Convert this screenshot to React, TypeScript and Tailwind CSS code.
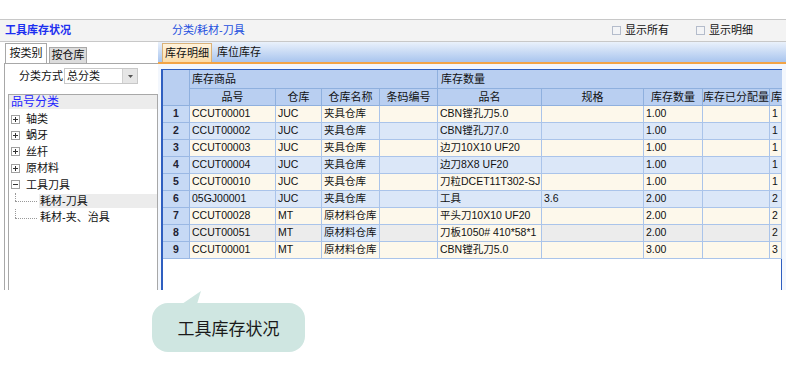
import React from "react";

const rows: string[][] = [
  ["1", "CCUT00001", "JUC", "夹具仓库", "", "CBN镗孔刀5.0", "", "1.00", "", "1"],
  ["2", "CCUT00002", "JUC", "夹具仓库", "", "CBN镗孔刀7.0", "", "1.00", "", "1"],
  ["3", "CCUT00003", "JUC", "夹具仓库", "", "边刀10X10 UF20", "", "1.00", "", "1"],
  ["4", "CCUT00004", "JUC", "夹具仓库", "", "边刀8X8 UF20", "", "1.00", "", "1"],
  ["5", "CCUT00010", "JUC", "夹具仓库", "", "刀粒DCET11T302-SJ", "", "1.00", "", "1"],
  ["6", "05GJ00001", "JUC", "夹具仓库", "", "工具", "3.6", "2.00", "", "2"],
  ["7", "CCUT00028", "MT", "原材料仓库", "", "平头刀10X10 UF20", "", "2.00", "", "2"],
  ["8", "CCUT00051", "MT", "原材料仓库", "", "刀板1050# 410*58*1", "", "2.00", "", "2"],
  ["9", "CCUT00001", "MT", "原材料仓库", "", "CBN镗孔刀5.0", "", "3.00", "", "3"],
];

const headers = ["品号", "仓库", "仓库名称", "条码编号", "品名", "规格", "库存数量", "库存已分配量", "库"];

function PlusBox({ minus }: { minus?: boolean }) {
  return (
    <svg width="9" height="9" viewBox="0 0 9 9" className="shrink-0">
      <rect x="0.5" y="0.5" width="8" height="8" fill="#fff" stroke="#a0a0a0" />
      <line x1="2" y1="4.5" x2="7" y2="4.5" stroke="#333" />
      {!minus && <line x1="4.5" y1="2" x2="4.5" y2="7" stroke="#333" />}
    </svg>
  );
}

function Check({ label }: { label: string }) {
  return (
    <div className="flex items-center gap-[4px]">
      <div className="w-[9px] h-[9px] border border-[#b4bccb] bg-[#f3f4f6]" />
      <span>{label}</span>
    </div>
  );
}

export default function App() {
  const font = { fontFamily: '"Liberation Sans", "Noto Sans CJK SC", sans-serif' };
  return (
    <div className="w-[790px] h-[390px] bg-white text-[11px] text-[#111] overflow-hidden" style={font}>
      <div className="h-[19px]" />
      {/* header bar */}
      <div className="w-[786px] h-[23px] border-t border-b border-[#c8c8c8] bg-[#f3f3f3] flex items-center">
        <div className="w-[172px] pl-[5px] font-bold text-[#1c2ff0]">工具库存状况</div>
        <div className="text-[#2450e0]">分类/耗材-刀具</div>
        <div className="ml-auto flex items-center gap-[27px] mr-[33px]">
          <Check label="显示所有" />
          <Check label="显示明细" />
        </div>
      </div>

      {/* body */}
      <div className="flex h-[248px] w-[786px]">
        {/* left panel */}
        <div className="w-[158px] flex flex-col">
          <div className="h-[20px] mt-[1px] pl-[5px] flex items-end">
            <div className="w-[42px] h-[20px] border border-b-0 border-[#a8a8a8] bg-white flex items-center justify-center">按类别</div>
            <div className="w-[38px] h-[16px] ml-[2px] border border-b-0 border-[#a8a8a8] bg-[#dcdcdc] flex items-center justify-center">按仓库</div>
          </div>
          <div className="flex-1 ml-[4px] border-l border-t border-[#a8a8a8] flex flex-col">
            <div className="h-[16px] mt-[4px] flex items-center pl-[14px]">
              <span className="w-[45px] shrink-0 whitespace-nowrap">分类方式</span>
              <div className="w-[74px] h-[16px] border border-[#c8c8c8] bg-white flex items-center">
                <span className="flex-1 pl-[2px]">总分类</span>
                <div className="w-[15px] h-[14px] bg-[#e6e6e6] border-l border-[#d0d0d0] flex items-center justify-center">
                  <svg width="5" height="3" viewBox="0 0 5 3"><polygon points="0,0 5,0 2.5,3" fill="#555" /></svg>
                </div>
              </div>
            </div>
            <div className="mt-[10px] ml-[3px] flex-1 border border-b-0 border-[#a8a8a8] flex flex-col">
              <div className="h-[14px] bg-[#ececec] text-[#2424ff] pl-[2px] leading-[14px] text-[12px]">品号分类</div>
              <div className="pt-[2px] relative">
                {["轴类", "蜗牙", "丝杆", "原材料"].map((t) => (
                  <div key={t} className="h-[16.4px] flex items-center pl-[2px] gap-[6px]">
                    <PlusBox />
                    <span>{t}</span>
                  </div>
                ))}
                <div className="h-[16.4px] flex items-center pl-[2px] gap-[6px]">
                  <PlusBox minus />
                  <span>工具刀具</span>
                </div>
                <div className="h-[16.4px] flex items-center">
                  <div className="w-[30px] h-full relative">
                    <div className="absolute left-[6px] top-0 h-1/2 border-l border-dotted border-[#999]" />
                    <div className="absolute left-[6px] top-1/2 w-[22px] border-t border-dotted border-[#999]" />
                  </div>
                  <div className="flex-1 h-[14px] bg-[#ececec] flex items-center pl-[1px]">耗材-刀具</div>
                </div>
                <div className="h-[16.4px] flex items-center">
                  <div className="w-[30px] h-full relative">
                    <div className="absolute left-[6px] top-0 h-1/2 border-l border-dotted border-[#999]" />
                    <div className="absolute left-[6px] top-1/2 w-[22px] border-t border-dotted border-[#999]" />
                  </div>
                  <div className="pl-[1px]">耗材-夹、治具</div>
                </div>
              </div>
            </div>
          </div>
        </div>

        {/* right panel */}
        <div className="flex-1 flex flex-col">
          <div className="h-[22px] bg-gradient-to-b from-[#eaf1fb] to-[#a9c5ee] border-b-2 border-[#f2a446] flex items-end pl-[4px]">
            <div className="w-[50px] h-[19px] bg-gradient-to-b from-[#fff3dc] to-[#fadcaa] border border-b-0 border-[#d9b27a] flex items-center justify-center">库存明细</div>
            <div className="h-[19px] ml-[5px] flex items-center">库位库存</div>
          </div>
          <div className="flex-1 flex bg-[#f3f7fd] pt-[5px] pl-[3px]">
            <div className="w-[621px] border-l-2 border-t border-r border-[#2f5fc0] bg-white">
              <div className="grid grid-cols-[27px_86px_46px_58px_58px_104px_102px_59px_67px_12px] grid-rows-[19px_17px]">
                <div className="row-span-2 bg-[#b9cff1] border-r border-b border-[#8fb0de]" />
                <div className="col-span-4 bg-[#b9cff1] border-r border-b border-[#8fb0de] pl-[2px] flex items-center">库存商品</div>
                <div className="col-span-5 bg-[#b9cff1] border-b border-[#8fb0de] pl-[3px] flex items-center">库存数量</div>
                {headers.map((h, i) => (
                  <div key={h} className={`bg-[#b9cff1] border-b border-[#8fb0de] flex items-center overflow-hidden whitespace-nowrap ${i === 8 ? "pl-[1px]" : "justify-center border-r"}`}>
                    {h}
                  </div>
                ))}
              </div>
              {rows.map((r, ri) => {
                const odd = ri % 2 === 0;
                const sel = ri === 7;
                return (
                  <div key={ri} className="grid grid-cols-[27px_86px_46px_58px_58px_104px_102px_59px_67px_12px] h-[17px] text-[10.5px]">
                    {r.map((c, ci) => {
                      if (ci === 0) {
                        return (
                          <div key={ci} className="bg-[#c6d9f5] border-r border-b border-[#9ab8e4] flex items-center justify-center font-bold text-[#223]">
                            {c}
                          </div>
                        );
                      }
                      let bg = odd ? "bg-[#fdf8eb]" : "bg-[#dbe7f8]";
                      if (sel) bg = ci === 3 ? "bg-[#dbe7f8]" : ci === 5 ? "bg-[#fdf8eb]" : "bg-[#ececec]";
                      return (
                        <div key={ci} className={`${bg} border-r border-b border-[#aac4ea] flex items-center pl-[2px] overflow-hidden whitespace-nowrap`}>
                          {c}
                        </div>
                      );
                    })}
                  </div>
                );
              })}
            </div>
          </div>
        </div>
      </div>

      {/* bubble */}
      <div className="relative ml-[152px] mt-[13px] w-[153px] h-[49px] rounded-[16px] bg-[#cfe6e1] flex items-center justify-center text-[17px] text-[#1a1a1a]" style={{ fontFamily: '"Noto Sans CJK SC", sans-serif' }}>
        <svg className="absolute left-[30px] top-[-12px]" width="20" height="13" viewBox="0 0 20 13">
          <polygon points="0,13 19,0 15,13" fill="#cfe6e1" />
        </svg>
        工具库存状况
      </div>
    </div>
  );
}
